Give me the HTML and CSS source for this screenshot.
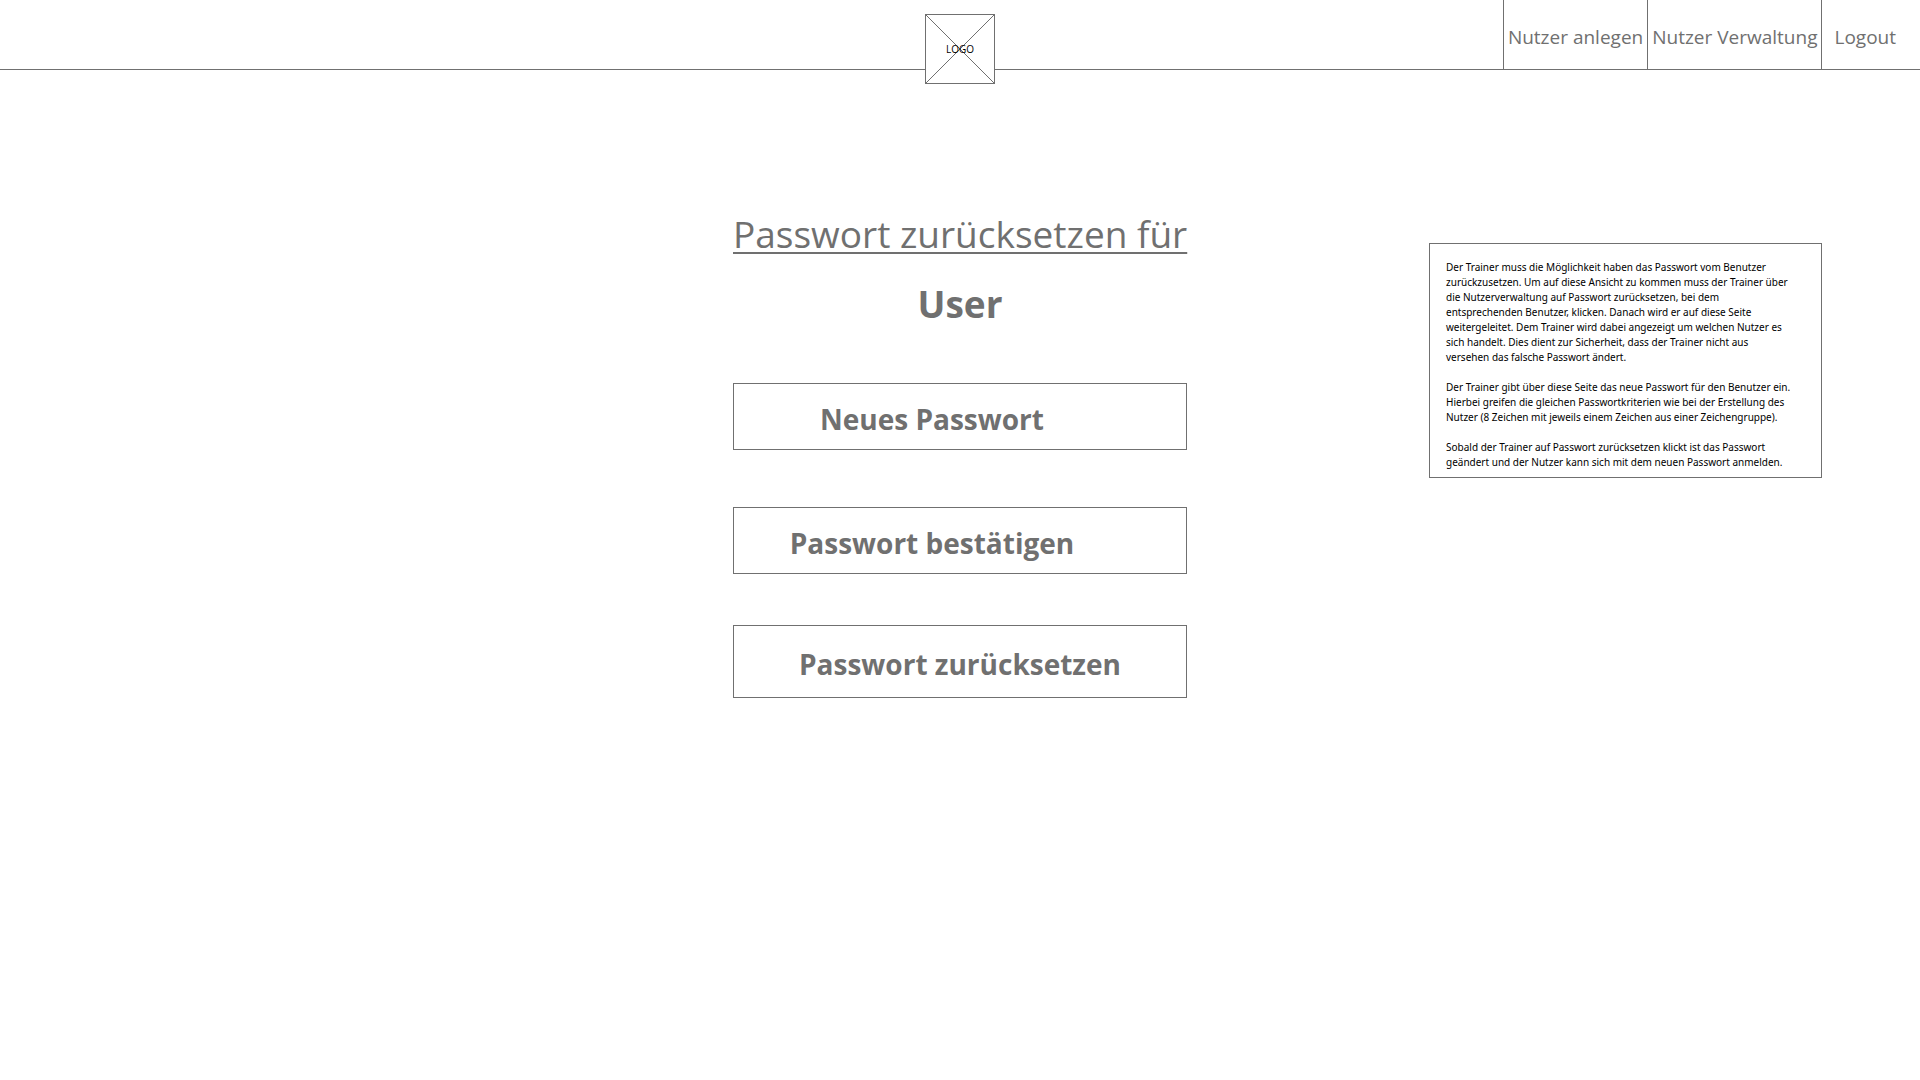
FILE: index.html
```html
<!DOCTYPE html>
<html lang="de">
<head>
  <meta charset="utf-8">
  <meta name="viewport" content="width=device-width, initial-scale=1">
  <title>Passwort zurücksetzen</title>
  <link rel="stylesheet" href="styles.css">
</head>
<body>
  <header class="header">
    <a class="logo" href="#">
      <svg class="logo-cross" viewBox="0 0 70 70" aria-hidden="true">
        <rect x="0.5" y="0.5" width="69" height="69"/>
        <path d="M0.5 0.5 69.5 69.5M69.5 0.5 0.5 69.5"/>
      </svg>
      <span class="logo-text">LOGO</span>
    </a>
    <nav class="nav">
      <a class="nav-link" href="#">Nutzer anlegen</a>
      <a class="nav-link" href="#">Nutzer Verwaltung</a>
      <a class="nav-link nav-link-last" href="#">Logout</a>
    </nav>
  </header>
  <main class="main">
    <form class="form">
      <h1 class="title">Passwort zurücksetzen für</h1>
      <p class="user">User</p>
      <div class="fields">
        <input class="field" type="password" aria-label="Neues Passwort" placeholder="Neues Passwort">
        <input class="field" type="password" aria-label="Passwort bestätigen" placeholder="Passwort bestätigen">
      </div>
      <button class="submit" type="submit">Passwort zurücksetzen</button>
    </form>
    <aside class="note">
      <p>Der Trainer muss die Möglichkeit haben das Passwort vom Benutzer<br>
        zurückzusetzen. Um auf diese Ansicht zu kommen muss der Trainer über<br>
        die Nutzerverwaltung auf Passwort zurücksetzen, bei dem<br>
        entsprechenden Benutzer, klicken. Danach wird er auf diese Seite<br>
        weitergeleitet. Dem Trainer wird dabei angezeigt um welchen Nutzer es<br>
        sich handelt. Dies dient zur Sicherheit, dass der Trainer nicht aus<br>
        versehen das falsche Passwort ändert.</p>
      <p>Der Trainer gibt über diese Seite das neue Passwort für den Benutzer ein.<br>
        Hierbei greifen die gleichen Passwortkriterien wie bei der Erstellung des<br>
        Nutzer (8 Zeichen mit jeweils einem Zeichen aus einer Zeichengruppe).</p>
      <p>Sobald der Trainer auf Passwort zurücksetzen klickt ist das Passwort<br>
        geändert und der Nutzer kann sich mit dem neuen Passwort anmelden.</p>
    </aside>
  </main>
</body>
</html>
```
FILE: styles.css
```css
* {
  box-sizing: border-box;
}

body {
  margin: 0;
  background: #fff;
  color: #707070;
  font-family: "Segoe UI", "Open Sans", "Noto Sans", sans-serif;
}

h1,
p {
  margin: 0;
}

.header {
  display: grid;
  grid-template-columns: 1fr 70px 1fr;
  grid-template-rows: 69px;
  border-bottom: 1px solid #707070;
}

.logo {
  grid-column: 2;
  display: grid;
  place-items: center;
  height: 70px;
  margin-top: 14px;
  background: #fff;
  color: #000;
  font-size: 10px;
  line-height: 14px;
  text-decoration: none;
}

.logo-cross,
.logo-text {
  grid-area: 1 / 1;
}

.logo-cross {
  width: 70px;
  height: 70px;
  fill: none;
  stroke: #707070;
}

.nav {
  display: flex;
  justify-content: flex-end;
}

.nav-link {
  display: flex;
  align-items: center;
  padding: 4px 4px 0;
  border-left: 1px solid #707070;
  color: #707070;
  font-size: 19px;
  text-decoration: none;
  white-space: nowrap;
}

.nav-link-last {
  padding-right: 24px;
  padding-left: 12px;
}

.main {
  display: grid;
  grid-template-columns: 1fr 454px 1fr;
  align-items: start;
  padding-top: 136px;
}

.form {
  grid-column: 2;
  display: flex;
  flex-direction: column;
}

.title,
.user {
  font-size: 37px;
  line-height: 56px;
  text-align: center;
}

.title {
  font-weight: 400;
  text-decoration: underline;
  text-decoration-thickness: 2px;
  text-underline-offset: 4px;
  white-space: nowrap;
}

.user {
  margin: 14px 0 51px;
  font-weight: 700;
}

.fields {
  display: grid;
  gap: 57px;
  margin-bottom: 51px;
}

.field,
.submit {
  width: 100%;
  border: 1px solid #707070;
  border-radius: 0;
  background: #fff;
  color: #707070;
  font: inherit;
  font-size: 28px;
  font-weight: 700;
  text-align: center;
}

.field {
  height: 67px;
  padding: 4px 56px 0 0;
}

.field::placeholder {
  color: #707070;
  opacity: 1;
}

.submit {
  height: 73px;
  padding: 4px 0 0;
}

.note {
  justify-self: end;
  width: 393px;
  margin: 37px 98px 0 0;
  padding: 16px 16px 7px;
  border: 1px solid #707070;
  color: #000;
  font-family: "Segoe UI", "Noto Sans", sans-serif;
  font-size: 10px;
  line-height: 15px;
  white-space: nowrap;
}

.note p + p {
  margin-top: 15px;
}
```
